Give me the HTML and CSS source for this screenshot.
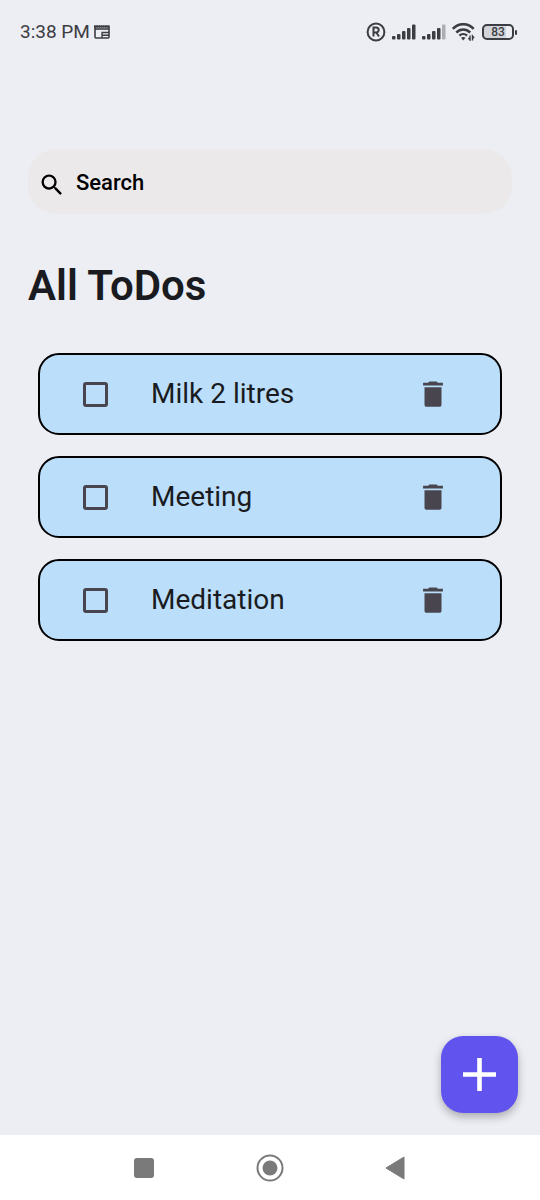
FILE: index.html
```html
<!DOCTYPE html>
<html lang="en">
<head>
<meta charset="utf-8">
<meta name="viewport" content="width=device-width, initial-scale=1">
<title>All ToDos</title>
<link rel="stylesheet" href="styles.css">
</head>
<body>
<div class="screen">
  <header class="status">
    <div class="status-left">
      <span>3:38 PM</span>
      <svg width="16" height="14" viewBox="0 0 16 14" fill="none" stroke="#3c3d42" aria-hidden="true"><rect x="1" y="1.500" width="14" height="11.500" rx="1" stroke-width="1.600"/><path d="M0 1.500h16" stroke-width="2.600" stroke-dasharray="1.800 .4"/><path d="M1 4h14" stroke-width="1.600"/><path d="M7.500 7.500h7.500M8 7.500V13M8 10.200h7" stroke-width="1.400"/></svg>
    </div>
    <div class="status-right">
      <svg width="20" height="20" viewBox="0 0 20 20" fill="none" stroke="#3c3d42" aria-hidden="true"><circle cx="10" cy="10" r="8.400" stroke-width="2"/><path d="M7.500 14.500v-9h2.700a2.500 2.500 0 0 1 0 5H7.500M10.300 10.500l2.700 4" stroke-width="2"/></svg>
      <svg width="24" height="16" viewBox="0 0 24 16" fill="#3c3d42" aria-hidden="true"><rect x="0" y="12" width="3.500" height="3.500" rx="1"/><rect x="5" y="10" width="3.500" height="5.500" rx="1"/><rect x="10" y="7" width="3.500" height="8.500" rx="1"/><rect x="15" y="4" width="3.500" height="11.500" rx="1"/><rect x="20" y="0.500" width="3.500" height="15" rx="1"/></svg>
      <svg width="24" height="16" viewBox="0 0 24 16" fill="#3c3d42" aria-hidden="true"><rect x="0" y="12" width="3.500" height="3.500" rx="1"/><rect x="5" y="10" width="3.500" height="5.500" rx="1"/><rect x="10" y="7" width="3.500" height="8.500" rx="1"/><rect x="15" y="4" width="3.500" height="11.500" rx="1"/><rect x="20" y="0.500" width="3.500" height="15" rx="1" fill="#adaeb3"/></svg>
      <svg width="24" height="18" viewBox="0 0 24 18" fill="none" stroke="#3c3d42" aria-hidden="true"><path d="M.8 5.800C6.800-.4 15.700-.4 21.700 5.800M4.300 9.500c4-4 9.900-4 13.900 0" stroke-width="2.500"/><path d="M7.400 12.700c2.300-2.200 5.400-2.200 7.700 0" stroke-width="2.300"/><path d="M9 14.800c1.300-1.100 3.200-1.100 4.500 0l-2.300 2.700z" fill="#3c3d42" stroke="none"/><path d="M18 12.500V17l-1.600-2M20.500 17.500V13l1.600 2" stroke-width="1.400"/></svg>
      <div class="battery"><span class="battery-level">83</span><i class="battery-tip"></i></div>
    </div>
  </header>

  <main class="content">
    <label class="search">
      <svg class="search-icon" viewBox="0 0 24 24" aria-hidden="true"><path d="M15.500 14h-.79l-.28-.27A6.470 6.470 0 0 0 16 9.500 6.500 6.500 0 1 0 9.500 16c1.610 0 3.090-.59 4.230-1.570l.27.28v.79l5 4.990L20.490 19l-4.990-5zm-6 0C7.010 14 5 11.990 5 9.500S7.010 5 9.500 5 14 7.010 14 9.500 11.990 14 9.500 14z"/></svg>
      <input class="search-input" type="text" placeholder="Search" aria-label="Search">
    </label>

    <h1 class="title">All ToDos</h1>

    <ul class="todos">
      <li class="todo">
        <input class="check" type="checkbox" id="todo-1">
        <label class="todo-text" for="todo-1">Milk 2 litres</label>
        <button class="delete" type="button" aria-label="Delete Milk 2 litres"><svg class="delete-icon" viewBox="0 0 24 24" aria-hidden="true"><path d="M6 19.500c0 .9.600 1.500 1.500 1.500h9c.9 0 1.500-.6 1.500-1.500V7.300H6zM19 4h-3.500l-1-.8h-5l-1 .8H5v2h14V4z"/></svg></button>
      </li>
      <li class="todo">
        <input class="check" type="checkbox" id="todo-2">
        <label class="todo-text" for="todo-2">Meeting</label>
        <button class="delete" type="button" aria-label="Delete Meeting"><svg class="delete-icon" viewBox="0 0 24 24" aria-hidden="true"><path d="M6 19.500c0 .9.600 1.500 1.500 1.500h9c.9 0 1.500-.6 1.500-1.500V7.300H6zM19 4h-3.500l-1-.8h-5l-1 .8H5v2h14V4z"/></svg></button>
      </li>
      <li class="todo">
        <input class="check" type="checkbox" id="todo-3">
        <label class="todo-text" for="todo-3">Meditation</label>
        <button class="delete" type="button" aria-label="Delete Meditation"><svg class="delete-icon" viewBox="0 0 24 24" aria-hidden="true"><path d="M6 19.500c0 .9.600 1.500 1.500 1.500h9c.9 0 1.500-.6 1.500-1.500V7.300H6zM19 4h-3.500l-1-.8h-5l-1 .8H5v2h14V4z"/></svg></button>
      </li>
    </ul>

    <button class="fab" type="button" aria-label="Add todo"><svg width="33" height="33" viewBox="0 0 33 33" aria-hidden="true"><path d="M16.500 0v33M0 16.500h33" stroke="#fff" stroke-width="4.600"/></svg></button>
  </main>

  <nav class="navbar" aria-label="System">
    <div class="navbar-keys">
      <button class="key" type="button" aria-label="Recent apps"><svg width="28" height="28" viewBox="0 0 28 28"><rect x="4" y="4" width="20" height="20" rx="3" fill="#7a7a7a"/></svg></button>
      <button class="key" type="button" aria-label="Home"><svg width="28" height="28" viewBox="0 0 28 28"><circle cx="14" cy="14" r="12.500" fill="none" stroke="#7a7a7a" stroke-width="2"/><circle cx="14" cy="14" r="7.500" fill="#7a7a7a"/></svg></button>
      <button class="key" type="button" aria-label="Back"><svg width="28" height="28" viewBox="0 0 28 28"><path d="M4 14 22 3v22z" fill="#7a7a7a" stroke="#7a7a7a" stroke-linejoin="round"/></svg></button>
    </div>
  </nav>
</div>
</body>
</html>
```

FILE: styles.css
```css
* {
  box-sizing: border-box;
}

body {
  margin: 0;
  background: #edeef4;
  color: #1a1b20;
  font-family: Roboto, "Liberation Sans", sans-serif;
}

button {
  padding: 0;
  border: 0;
  background: none;
  cursor: pointer;
}

svg {
  display: block;
}

.screen {
  display: flex;
  flex-direction: column;
  min-height: 100vh;
}

.status {
  display: flex;
  align-items: center;
  justify-content: space-between;
  height: 64px;
  padding: 0 23px 0 20px;
  color: #3c3d42;
}

.status-left,
.status-right {
  display: flex;
  align-items: center;
}

.status-left {
  gap: 4px;
  font-size: 19px;
  line-height: 26px;
}

.status-right {
  gap: 6px;
}

.battery {
  display: flex;
  align-items: center;
  gap: 1px;
}

.battery-level {
  width: 32px;
  border: 2px solid #3c3d42;
  border-radius: 5px;
  background: linear-gradient(90deg, #d3d4d9 80%, #edeef4 80%);
  font-size: 12px;
  font-weight: 500;
  line-height: 12px;
  text-align: center;
}

.battery-tip {
  width: 2px;
  height: 5px;
  border-radius: 1px;
  background: #3c3d42;
}

.content {
  display: flex;
  flex: 1;
  flex-direction: column;
  padding: 85px 28px 22px;
}

.search {
  display: flex;
  align-items: center;
  gap: 10px;
  height: 65px;
  padding: 3px 10px 0;
  border-radius: 28px;
  background: #ece9ea;
}

.search-icon {
  flex: none;
  width: 28px;
  height: 28px;
  margin-top: 3px;
}

.search-input {
  flex: 1;
  min-width: 0;
  padding: 0;
  border: 0;
  outline: 0;
  background: none;
  color: #000;
  font: 500 22px/28px Roboto, "Liberation Sans", sans-serif;
}

.search-input::placeholder {
  color: #000;
  opacity: 1;
}

.title {
  margin: 48px 0 43px;
  font-size: 42px;
  font-weight: 600;
  line-height: 48px;
}

.todos {
  display: grid;
  gap: 21px;
  margin: 0;
  padding: 0 10px;
  list-style: none;
}

.todo {
  display: flex;
  align-items: center;
  height: 82px;
  padding: 0 50px 0 43px;
  border: 2px solid #000;
  border-radius: 21px;
  background: #bbdefb;
}

.check {
  flex: none;
  width: 25px;
  height: 25px;
  margin: 0;
  appearance: none;
  border: 3px solid #49454f;
  border-radius: 3px;
}

.check:checked {
  background: #49454f;
}

.todo-text {
  flex: 1;
  margin-left: 43px;
  font-size: 28px;
  line-height: 36px;
}

.delete-icon {
  width: 34px;
  height: 34px;
  fill: #49454f;
}

.fab {
  display: grid;
  place-items: center;
  width: 77px;
  height: 77px;
  margin: auto -6px 0 auto;
  border-radius: 22px;
  background: #6053ee;
  box-shadow: 0 4px 8px rgb(0 0 0 / 28%);
}

.navbar {
  display: flex;
  align-items: center;
  justify-content: center;
  height: 65px;
  background: #fff;
}

.navbar-keys {
  display: grid;
  grid-template-columns: repeat(3, 1fr);
  justify-items: center;
  width: 70%;
}
```
